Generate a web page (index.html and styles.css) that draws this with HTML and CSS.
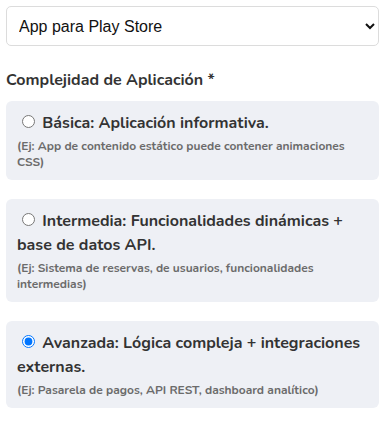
FILE: index.html
```html
<!DOCTYPE html>
<html lang="es">
<head>
<meta charset="utf-8">
<title>Complejidad</title>
<link rel="stylesheet" href="styles.css">
</head>
<body>
<div class="form">
  <select class="platform">
    <option>App para Play Store</option>
    <option>App para App Store</option>
    <option>Web</option>
  </select>

  <div class="field-label">Complejidad de Aplicación *</div>

  <div class="options">
    <div class="option">
      <label class="option-title"><input type="radio" name="complejidad"> Básica: Aplicación informativa.</label>
      <div class="option-desc">(Ej: App de contenido estático puede contener animaciones CSS)</div>
    </div>
    <div class="option">
      <label class="option-title"><input type="radio" name="complejidad"> Intermedia: Funcionalidades dinámicas + base de datos API.</label>
      <div class="option-desc">(Ej: Sistema de reservas, de usuarios, funcionalidades intermedias)</div>
    </div>
    <div class="option">
      <label class="option-title"><input type="radio" name="complejidad" checked> Avanzada: Lógica compleja + integraciones externas.</label>
      <div class="option-desc">(Ej: Pasarela de pagos, API REST, dashboard analítico)</div>
    </div>
  </div>
</div>
</body>
</html>
```
FILE: styles.css
```css
html, body {
  margin: 0;
  background: #ffffff;
}
body {
  padding: 6px 8px 6px 6px;
  font-family: "Nunito", "Open Sans", "Noto Sans", sans-serif;
  color: #333333;
}
.form {
  display: flex;
  flex-direction: column;
}
.platform {
  width: 100%;
  height: 40px;
  padding: 0 8px;
  font-family: "Liberation Sans", Arial, sans-serif;
  font-size: 16px;
  color: #111;
  background: #ffffff;
  border: 1px solid #dcdcdc;
  border-radius: 5px;
}
.field-label {
  margin-top: 23px;
  font-size: 16px;
  line-height: 22px;
  font-weight: 700;
  color: #333333;
}
.options {
  margin-top: 10px;
  display: flex;
  flex-direction: column;
  gap: 19px;
}
.option {
  background: #eef0f5;
  border-radius: 6px;
  padding: 10px 11px 10px 11px;
}
.option-title {
  display: block;
  font-size: 16px;
  line-height: 24px;
  font-weight: 700;
  color: #333333;
}
.option-title input {
  margin: 3px 3px 0 5px;
  width: 13px;
  height: 13px;
}
.option-desc {
  margin-top: 3px;
  font-size: 12px;
  line-height: 16px;
  font-weight: 700;
  color: #6b6b6b;
}
```
